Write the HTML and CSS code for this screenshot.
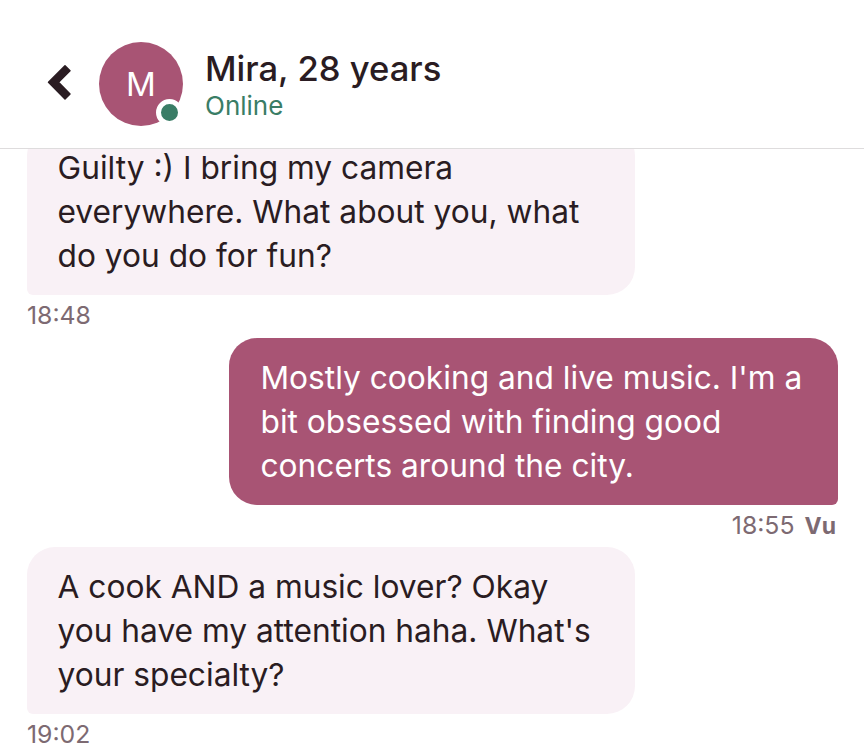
FILE: index.html
```html
<!DOCTYPE html>
<html lang="en">
<head>
<meta charset="utf-8">
<title>Mira</title>
<link rel="stylesheet" href="styles.css">
</head>
<body>
<main class="chat">
  <header class="header">
    <button class="back" aria-label="Back">
      <svg width="28" height="38" viewBox="0 0 28 38"><path d="M3.5 18.3 L20 1.8 L25 6.8 L13.5 18.3 L25 30 L20 35 Z" fill="#2a1c22" stroke="#2a1c22" stroke-width="1.5" stroke-linejoin="round"/></svg>
    </button>
    <div class="avatar">M<span class="status"></span></div>
    <div class="who">
      <div class="name">Mira, 28 years</div>
      <div class="online">Online</div>
    </div>
  </header>
  <section class="messages">
    <div class="msg in">
      <div class="bubble">Guilty :) I bring my camera<br>everywhere. What about you, what<br>do you do for fun?</div>
      <div class="meta">18:48</div>
    </div>
    <div class="msg out">
      <div class="bubble">Mostly cooking and live music. I'm a<br>bit obsessed with finding good<br>concerts around the city.</div>
      <div class="meta">18:55 <b>Vu</b></div>
    </div>
    <div class="msg in">
      <div class="bubble">A cook AND a music lover? Okay<br>you have my attention haha. What's<br>your specialty?</div>
      <div class="meta">19:02</div>
    </div>
  </section>
</main>
</body>
</html>
```

FILE: styles.css
```css
* { box-sizing: border-box; }
html, body { margin: 0; height: 100%; }
body { background: #fff; font-family: Inter, Roboto, sans-serif; color: #2a1c22; overflow: hidden; }
.chat { height: 744px; display: flex; flex-direction: column; }
.header { flex: none; height: 149px; display: flex; align-items: flex-start; padding: 42px 0 0 45px; border-bottom: 1px solid #dedcdd; background: #fff; }
.back { width: 28px; height: 38px; margin-top: 22px; padding: 0; border: 0; background: none; display: block; }
.back svg { display: block; }
.avatar { position: relative; width: 84px; height: 84px; margin-left: 26px; border-radius: 50%; background: #a85474; color: #fff; font-size: 33px; font-weight: 400; display: flex; align-items: center; justify-content: center; }
.status { position: absolute; right: 0; bottom: 0; width: 27px; height: 27px; border-radius: 50%; background: #3a7d66; border: 5px solid #fff; }
.who { margin-left: 22px; margin-top: 5px; }
.name { font-size: 34.6px; font-weight: 500; line-height: 42px; }
.online { font-size: 26px; line-height: 34px; color: #3a7d66; }
.messages { flex: 1; min-height: 0; overflow: hidden; display: flex; flex-direction: column; justify-content: flex-end; padding: 0 26px 0 27px; }
.msg { flex: none; display: flex; flex-direction: column; }
.msg.in { align-items: flex-start; }
.msg.out { align-items: flex-end; margin: 13px 0 12px; }
.bubble { width: 608px; padding: 18px 30px 17px 30.5px; font-size: 31.7px; line-height: 44px; border-radius: 28px; }
.in .bubble { background: #f9f1f6; border-bottom-left-radius: 6px; }
.out .bubble { width: 609px; background: #a85474; color: #fff; border-bottom-right-radius: 6px; padding-left: 31.5px; }
.meta { font-size: 24.8px; line-height: 20px; margin-top: 10px; color: #7d6a72; }
.meta b { font-size: 23px; font-weight: 700; line-height: 0; margin-left: 3px; }
.out .meta { margin-right: 2px; }
```
